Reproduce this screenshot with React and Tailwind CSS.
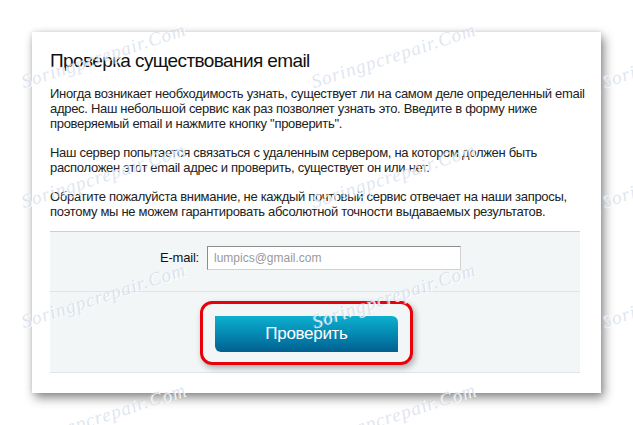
import React from 'react';

// водяные знаки поверх скриншота
const marks = [
  'left-[25px] top-[72px]',
  'left-[315px] top-[72px]',
  'left-[605px] top-[72px]',
  'left-[25px] top-[192px]',
  'left-[315px] top-[192px]',
  'left-[605px] top-[192px]',
  'left-[25px] top-[312px]',
  'left-[315px] top-[312px]',
  'left-[605px] top-[312px]',
  'left-[25px] top-[432px]',
  'left-[315px] top-[432px]',
];

const Watermark = ({ pos }) => (
  <span
    className={`absolute ${pos} origin-bottom-left -rotate-[18deg] whitespace-nowrap text-[19px] leading-[20px] italic font-['Liberation_Serif',serif] tracking-[1px] text-[#c5d0e2]/55 [text-shadow:1px_1px_0_rgba(255,255,255,0.9)] pointer-events-none`}
  >
    Soringpcrepair.Com
  </span>
);

const App = () => {
  return (
    <div className="relative w-[633px] h-[425px] overflow-hidden bg-white pt-[32px] pl-[32px] font-['Liberation_Sans',Arial,sans-serif] text-[#222]">
      <div className="w-[569px] h-[361px] bg-white shadow-[3px_5px_10px_rgba(0,0,0,0.45),0_0_5px_rgba(0,0,0,0.12)] pl-[18px] pt-[17px]">
        <h1 className="text-[19px] leading-[24px] font-normal tracking-[-0.6px] text-[#111]">Проверка существования email</h1>

        <div className="mt-[13px] w-[540px] text-[13px] leading-[15px] tracking-[-0.3px]">
          <p className="mb-[14px]">
            Иногда возникает необходимость узнать, существует ли на самом деле определенный email адрес. Наш
            небольшой сервис как раз позволяет узнать это. Введите в форму ниже проверяемый email и нажмите кнопку
            "проверить".
          </p>
          <p className="mb-[14px]">
            Наш сервер попытается связаться с удаленным сервером, на котором должен быть расположен этот email адрес
            и проверить, существует он или нет.
          </p>
          <p>
            Обратите пожалуйста внимание, не каждый почтовый сервис отвечает на наши запросы, поэтому мы не можем
            гарантировать абсолютной точности выдаваемых результатов.
          </p>
        </div>

        <div className="mt-[12px] w-[530px] bg-[#f3f6f7] border-t border-[#c3d3da]">
          {/* строка с полем */}
          <div className="flex items-center pt-[14px] pb-[21px] border-b border-[#dde6ea]">
            <label className="w-[157px] text-right text-[13px] tracking-[-0.2px] pr-[8px] text-[#111]">E-mail:</label>
            <input
              type="text"
              placeholder="lumpics@gmail.com"
              className="w-[254px] h-[24px] bg-white px-[6px] text-[12px] text-[#444] placeholder:text-[#9a9a9a] outline-none border border-t-[#8c8c8c] border-l-[#8c8c8c] border-r-[#d2d2d2] border-b-[#d2d2d2]"
            />
          </div>

          {/* строка с кнопкой */}
          <div className="pt-[9px] pb-[7px] border-b border-[#dde6ea]">
            <div className="ml-[150px] w-[213px] border-[3px] border-[#e8000b] rounded-[12px] pt-[12px] pb-[10px] px-[12px] shadow-[2px_3px_6px_rgba(0,0,0,0.3)]">
              <button className="w-[183px] h-[36px] rounded-tr-[6px] rounded-bl-[6px] bg-gradient-to-b from-[#0db0cf] via-[#0589b3] to-[#02608f] text-white text-[17px] leading-[36px] tracking-[-0.3px]">
                Проверить
              </button>
            </div>
          </div>
        </div>
      </div>

      {marks.map((pos) => (
        <Watermark key={pos} pos={pos} />
      ))}
    </div>
  );
};

export default App;
